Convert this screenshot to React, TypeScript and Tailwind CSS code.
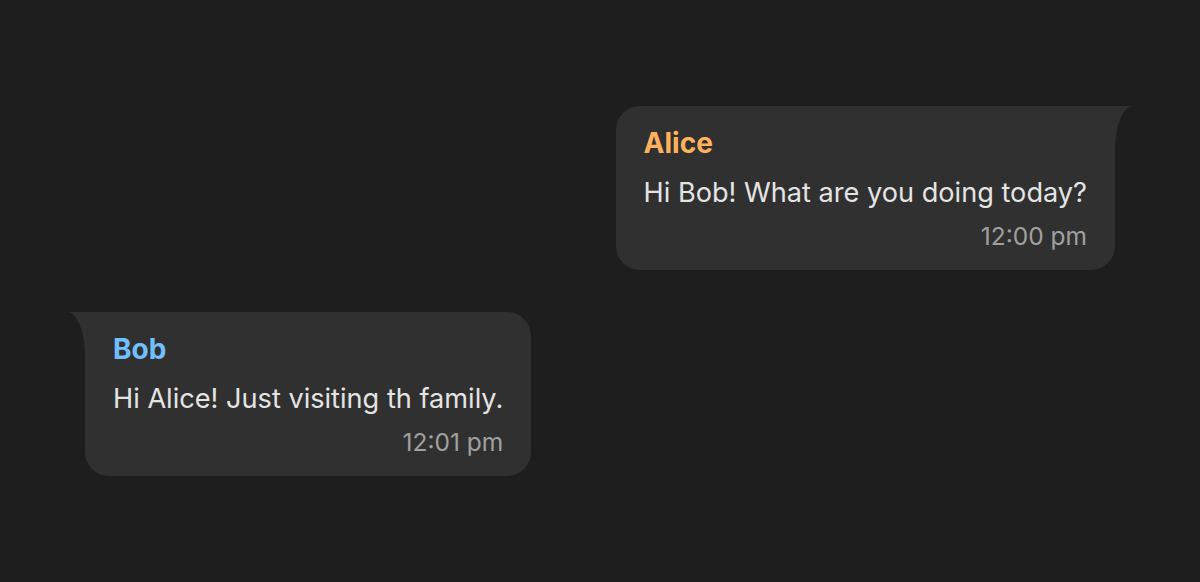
import React from "react";

type Msg = {
  author: string;
  text: string;
  time: string;
  mine: boolean;
};

const messages: Msg[] = [
  { author: "Alice", text: "Hi Bob! What are you doing today?", time: "12:00 pm", mine: true },
  { author: "Bob", text: "Hi Alice! Just visiting th family.", time: "12:01 pm", mine: false },
];

const Tail: React.FC<{ side: "left" | "right" }> = ({ side }) =>
  side === "right" ? (
    <svg width="18" height="44" viewBox="0 0 18 44" className="absolute top-0 -right-[18px]">
      <path d="M0 0 H18 A18 44 0 0 0 0 44 Z" fill="#303030" />
    </svg>
  ) : (
    <svg width="18" height="44" viewBox="0 0 18 44" className="absolute top-0 -left-[18px]">
      <path d="M18 0 H0 A18 44 0 0 1 18 44 Z" fill="#303030" />
    </svg>
  );

const Bubble: React.FC<{ msg: Msg }> = ({ msg }) => (
  <div className={msg.mine ? "flex justify-end" : "flex justify-start"}>
    <div
      className={
        "relative bg-[#303030] px-7 pt-[20px] pb-[18px] " +
        (msg.mine ? "rounded-[24px] rounded-tr-none" : "rounded-[24px] rounded-tl-none")
      }
    >
      <Tail side={msg.mine ? "right" : "left"} />
      <div
        className={
          "text-[28px] leading-[35px] font-bold " +
          (msg.mine ? "text-[#ffb25e]" : "text-[#70c0ff]")
        }
      >
        {msg.author}
      </div>
      <div className="mt-[14px] text-[27.15px] leading-[36px] text-[#e4e4e4] whitespace-nowrap">
        {msg.text}
      </div>
      <div className="mt-[9px] text-right text-[24.5px] leading-[32px] text-[#a0a0a0]">
        {msg.time}
      </div>
    </div>
  </div>
);

const App: React.FC = () => {
  return (
    <div
      className="min-h-screen bg-[#1e1e1e] flex flex-col justify-center gap-[42px] px-[85px]"
      style={{ fontFamily: "Inter, 'Noto Sans', sans-serif" }}
    >
      {messages.map((m) => (
        <Bubble key={m.author} msg={m} />
      ))}
    </div>
  );
};

export default App;
